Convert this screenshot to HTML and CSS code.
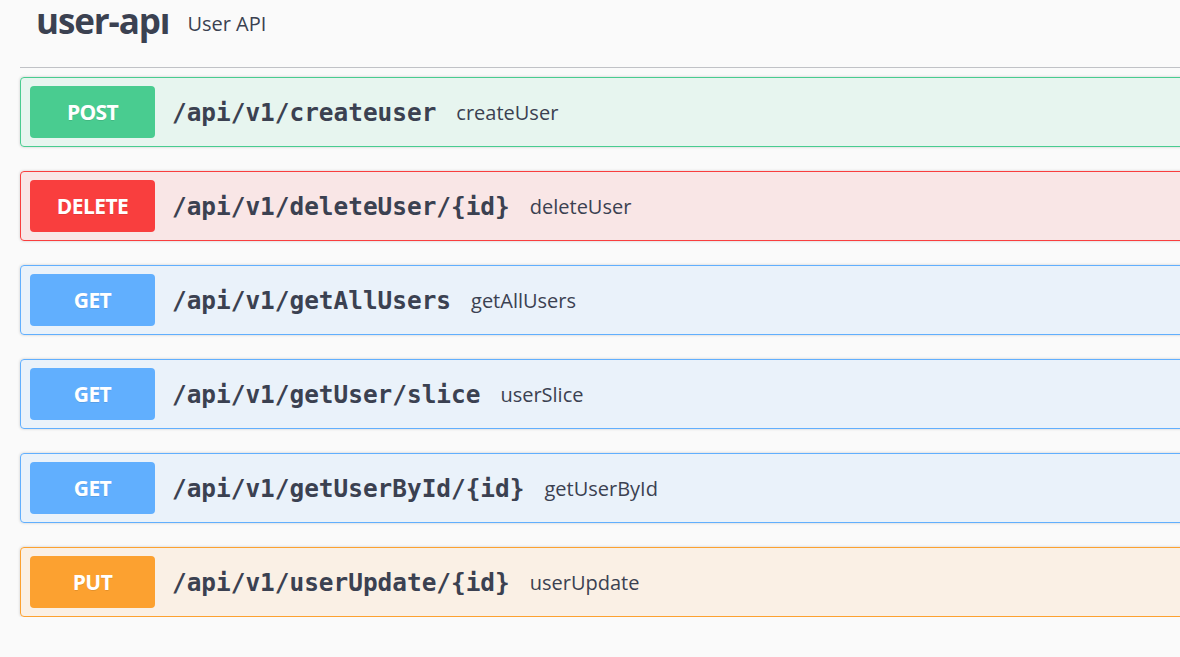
FILE: index.html
```html
<!DOCTYPE html>
<html>
<head>
<meta charset="utf-8">
<link rel="stylesheet" href="styles.css">
</head>
<body>
<div class="wrap">
  <div class="tag-header">
    <span class="tag-clip"><span class="tag-name">user-api</span></span>
    <span class="tag-desc">User API</span>
  </div>
  <div class="ops">
    <div class="op op-post">
      <span class="method">POST</span>
      <span class="path">/api/v1/createuser</span>
      <span class="desc">createUser</span>
    </div>
    <div class="op op-delete">
      <span class="method">DELETE</span>
      <span class="path">/api/v1/deleteUser/{id}</span>
      <span class="desc">deleteUser</span>
    </div>
    <div class="op op-get">
      <span class="method">GET</span>
      <span class="path">/api/v1/getAllUsers</span>
      <span class="desc">getAllUsers</span>
    </div>
    <div class="op op-get">
      <span class="method">GET</span>
      <span class="path">/api/v1/getUser/slice</span>
      <span class="desc">userSlice</span>
    </div>
    <div class="op op-get">
      <span class="method">GET</span>
      <span class="path">/api/v1/getUserById/{id}</span>
      <span class="desc">getUserById</span>
    </div>
    <div class="op op-put">
      <span class="method">PUT</span>
      <span class="path">/api/v1/userUpdate/{id}</span>
      <span class="desc">userUpdate</span>
    </div>
  </div>
</div>
</body>
</html>
```
FILE: styles.css
```css
html, body {
  margin: 0;
  padding: 0;
  background: #fafafa;
  overflow: hidden;
}
body {
  font-family: "Open Sans", "Noto Sans", sans-serif;
  color: #3b4151;
}
.wrap {
  padding-left: 20px;
  margin-right: -20px;
}
.tag-header {
  box-sizing: border-box;
  height: 68px;
  border-bottom: 1px solid rgba(59, 65, 81, 0.3);
  display: flex;
  align-items: flex-start;
  padding: 14px 0 0 16px;
}
.tag-clip {
  display: block;
  height: 31px;
  overflow: hidden;
}
.tag-name {
  display: block;
  margin-top: -17px;
  font-family: "Open Sans", sans-serif;
  font-weight: 700;
  font-size: 35px;
  line-height: 48px;
  letter-spacing: -1.1px;
  color: #3b4151;
}
.tag-desc {
  margin-left: 18px;
  font-size: 20px;
  line-height: 20px;
  color: #3b4151;
}
.ops {
  padding-top: 9px;
  display: flex;
  flex-direction: column;
  gap: 24px;
}
.op {
  display: flex;
  align-items: center;
  border: 1px solid;
  border-radius: 4px;
  padding: 8px 9px;
  box-shadow: 0 0 3px rgba(0, 0, 0, 0.19);
}
.method {
  flex: none;
  width: 125px;
  height: 52px;
  border-radius: 4px;
  display: flex;
  align-items: center;
  justify-content: center;
  color: #fff;
  font-family: "Open Sans", sans-serif;
  font-weight: 700;
  font-size: 21px;
  letter-spacing: -0.6px;
  text-shadow: 0 1px 0 rgba(0, 0, 0, 0.1);
}
.path {
  margin-left: 17px;
  font-family: "DejaVu Sans Mono", "Liberation Mono", monospace;
  font-weight: 700;
  font-size: 24.4px;
  color: #3b4151;
}
.desc {
  margin-left: 20px;
  font-size: 20px;
  color: #3b4151;
}
.op-post { background: rgba(73, 204, 144, 0.1); border-color: #49cc90; }
.op-post .method { background: #49cc90; }
.op-delete { background: rgba(249, 62, 62, 0.1); border-color: #f93e3e; }
.op-delete .method { background: #f93e3e; }
.op-get { background: rgba(97, 175, 254, 0.1); border-color: #61affe; }
.op-get .method { background: #61affe; }
.op-put { background: rgba(252, 161, 48, 0.1); border-color: #fca130; }
.op-put .method { background: #fca130; }
```
